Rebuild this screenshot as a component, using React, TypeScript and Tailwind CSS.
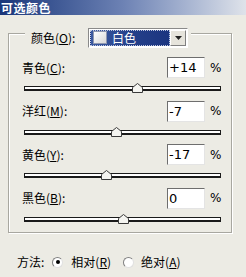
import React from "react";

const rows = [
  { label: "青色", key: "C", value: "+14", v: 14 },
  { label: "洋红", key: "M", value: "-7", v: -7 },
  { label: "黄色", key: "Y", value: "-17", v: -17 },
  { label: "黑色", key: "B", value: "0", v: 0 },
];

function Thumb({ v }: { v: number }) {
  const x = 98 + (v / 100) * 98;
  return (
    <svg
      className="absolute top-[-4px]"
      style={{ left: x - 5 }}
      width="11"
      height="10"
      viewBox="0 0 11 10"
    >
      <polygon points="0.5,9.5 0.5,4.5 5.5,0.5 10.5,4.5 10.5,9.5" fill="#f4f4f0" stroke="#3a3a3a" strokeWidth="1" />
    </svg>
  );
}

function Label({ text, k }: { text: string; k: string }) {
  return (
    <span>
      {text}(<span className="underline">{k}</span>):
    </span>
  );
}

export default function App() {
  return (
    <div
      className="w-[246px] h-[277px] bg-[#ecebe4] text-black text-[12px] overflow-hidden flex flex-col"
      style={{ fontFamily: '"Noto Sans CJK SC", "Liberation Sans", sans-serif' }}
    >
      <div className="h-[15px] shrink-0 bg-gradient-to-r from-[#1a367a] via-[#6d82b4] to-[#dfe3ea] flex items-center pl-[1px]">
        <span className="text-white font-bold text-[12px] leading-[14px] tracking-[0.5px]">可选颜色</span>
      </div>
      <div className="relative ml-[8px] mt-[18px] w-[224px] h-[200px] border border-[#a8a7a0] shadow-[1px_1px_0_#ffffff,inset_1px_1px_0_#ffffff]">
        <div className="absolute left-[16px] top-[-7px] h-[21px] flex items-center bg-[#ecebe4] pl-[6px] pr-[3px]">
          <span className="w-[57px]">
            <Label text="颜色" k="O" />
          </span>
          <div className="w-[100px] h-[20px] border border-t-[#8a8a8a] border-l-[#8a8a8a] border-b-[#ffffff] border-r-[#ffffff] bg-white flex p-[1px]">
            <div className="flex-1 bg-gradient-to-r from-[#3c5aa0] via-[#24408a] to-[#1c3580] border border-dotted border-[#c0c8e0] flex items-center pl-[2px]">
              <div className="w-[14px] h-[13px] bg-gradient-to-br from-[#ffffff] to-[#d8d8d8] border border-[#9098b0]" />
              <span className="text-white ml-[5px] leading-none">白色</span>
            </div>
            <div className="w-[16px] bg-[#e6e4dc] border border-t-white border-l-white border-b-[#808080] border-r-[#808080] flex items-center justify-center">
              <svg width="7" height="4" viewBox="0 0 7 4">
                <polygon points="0,0 7,0 3.5,4" fill="#222" />
              </svg>
            </div>
          </div>
        </div>
        <div className="pt-[23px] flex flex-col">
          {rows.map((r) => (
            <div key={r.key} className="h-[43.5px] flex flex-col">
              <div className="h-[21px] flex items-center pl-[13px] pr-[9px]">
                <span className="flex-1">
                  <Label text={r.label} k={r.key} />
                </span>
                <div
                  className="w-[38px] h-[21px] bg-white border border-t-[#6e6e6e] border-l-[#6e6e6e] border-b-[#e4e4e4] border-r-[#e4e4e4] flex items-center pl-[1px] text-[13px] leading-none"
                  style={{ fontFamily: '"DejaVu Sans", "Liberation Sans", sans-serif' }}
                >
                  {r.value}
                </div>
                <span
                  className="w-[12px] ml-[5px] text-[12px]"
                  style={{ fontFamily: '"DejaVu Sans", "Liberation Sans", sans-serif' }}
                >
                  %
                </span>
              </div>
              <div className="relative ml-[15px] mt-[8px] w-[197px] h-[5px] border border-[#1a1a1a] border-b-2 bg-white">
                <Thumb v={r.v} />
              </div>
            </div>
          ))}
        </div>
      </div>
      <div className="flex items-center mt-[21px] ml-[17px] h-[16px]">
        <span>方法:</span>
        <div className="ml-[8px] w-[11px] h-[11px] rounded-full bg-white border border-t-[#808080] border-l-[#808080] border-b-[#e0e0e0] border-r-[#e0e0e0] flex items-center justify-center">
          <div className="w-[4px] h-[4px] rounded-full bg-black" />
        </div>
        <span className="ml-[8px]">
          相对(<span className="underline">R</span>)
        </span>
        <div className="ml-[12px] w-[11px] h-[11px] rounded-full bg-white border border-t-[#808080] border-l-[#808080] border-b-[#e0e0e0] border-r-[#e0e0e0]" />
        <span className="ml-[7px]">
          绝对(<span className="underline">A</span>)
        </span>
      </div>
    </div>
  );
}
